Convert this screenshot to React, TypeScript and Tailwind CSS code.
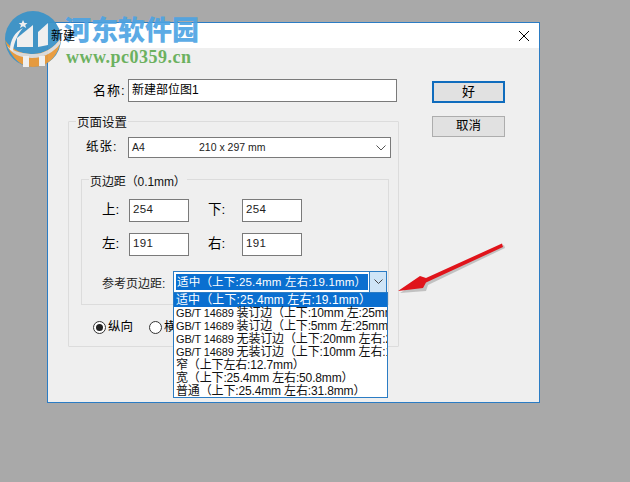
import React from "react";

const F = "font-['Liberation_Sans','Noto_Sans_CJK_SC',sans-serif]";

function Field({ label, value, labelW }: { label: string; value: string; labelW: string }) {
  return (
    <div className="flex items-center">
      <span className={`${labelW} text-[13.5px] text-black text-left`}>{label}</span>
      <div className="w-[60px] h-[23px] border border-[#7a7a7a] bg-white text-[11.5px] leading-[19px] pl-[3px] text-[#222] tracking-[0.4px]">{value}</div>
    </div>
  );
}

const gb = [
  "装订边（上下:10mm 左:25mm右:10mm）",
  "装订边（上下:5mm 左:25mm右:5mm）",
  "无装订边（上下:20mm 左右:25mm）",
  "无装订边（上下:10mm 左右:10mm）",
];
const items = [
  "窄（上下左右:12.7mm）",
  "宽（上下:25.4mm 左右:50.8mm）",
  "普通（上下:25.4mm 左右:31.8mm）",
];

export default function App() {
  return (
    <div className={`relative w-[630px] h-[482px] overflow-hidden bg-[#a9a9a9] pt-[22px] pl-[47px] ${F}`}>
      {/* dialog */}
      <div className="w-[493px] h-[381px] border border-[#2b7cc4] bg-[#efefef] flex flex-col">
        <div className="h-[25px] bg-white flex items-center justify-between pl-[3px] pr-[9px] shrink-0">
          <span className="relative z-10 text-[12px] text-black">新建</span>
          <svg width="12" height="12" viewBox="0 0 12 12" className="text-black">
            <path d="M1 1 L11 11 M11 1 L1 11" stroke="currentColor" strokeWidth="1" fill="none" />
          </svg>
        </div>
        <div className="flex pl-[20px] pt-[31px]">
          {/* left column */}
          <div className="w-[331px] flex flex-col">
            <div className="flex items-center pl-[25px]">
              <span className="text-[13px] text-black tracking-[1px] w-[35px]">名称:</span>
              <div className="w-[269px] h-[23px] border border-[#7a7a7a] bg-white text-[12px] leading-[21px] pl-[3px] text-black shrink-0">新建部位图1</div>
            </div>
            {/* page setup group */}
            <div className="relative mt-[19px] h-[226px] border border-[#dcdcdc] rounded-[1px] pt-[15px] pl-[12px]">
              <span className="absolute left-[7px] top-[-6px] px-[1px] bg-[#efefef] text-[12.5px] leading-[15px] text-[#111]">页面设置</span>
              <div className="flex items-center">
                <span className="w-[47px] pl-[5px] text-[12.5px] text-black tracking-[1px]">纸张:</span>
                <div className="w-[263px] h-[21px] border border-[#7a7a7a] bg-white flex items-center justify-between pl-[3px] pr-[4px]">
                  <span className="flex text-[10.5px] text-[#222]">
                    <span className="w-[67px]">A4</span>
                    <span>210 x 297 mm</span>
                  </span>
                  <svg width="10" height="6" viewBox="0 0 10 6"><path d="M0.5 0.5 L5 5 L9.5 0.5" stroke="#555" fill="none" /></svg>
                </div>
              </div>
              {/* margin group */}
              <div className="relative mt-[21px] w-[308px] h-[126px] border border-[#dcdcdc] pt-[19px] pl-[20px]">
                <span className="absolute left-[7px] top-[-5px] px-[1px] bg-[#efefef] text-[12px] leading-[15px] tracking-[-0.1px] text-[#111]">页边距（0.1mm）</span>
                <div className="flex gap-[19px]">
                  <Field label="上:" value="254" labelW="w-[27px]" />
                  <Field label="下:" value="254" labelW="w-[34px]" />
                </div>
                <div className="flex gap-[19px] mt-[11px]">
                  <Field label="左:" value="191" labelW="w-[27px]" />
                  <Field label="右:" value="191" labelW="w-[34px]" />
                </div>
                <div className="flex items-center mt-[15px]">
                  <span className="w-[71px] pt-[3px] text-[12px] text-[#222] whitespace-nowrap">参考页边距:</span>
                  <div className="w-[214px] h-[22px] border border-[#2b7cc4] bg-white flex items-stretch justify-between shrink-0">
                    <span className="mt-[2px] mb-[2px] ml-[2px] bg-[#0a6fd0] text-white text-[11.5px] leading-[16px] pl-[1px] pr-[2px] whitespace-nowrap tracking-[0.2px]">适中（上下:25.4mm 左右:19.1mm）</span>
                    <span className="w-[17px] bg-[#cfe5f7] border-l border-[#2b7cc4] flex items-center justify-center">
                      <svg width="9" height="6" viewBox="0 0 9 6"><path d="M0.5 0.5 L4.5 4.5 L8.5 0.5" stroke="#444" fill="none" /></svg>
                    </span>
                  </div>
                </div>
              </div>
              {/* orientation */}
              <div className="flex items-center gap-[16px] mt-[13px] pl-[12px] text-[12.5px] text-black">
                <span className="flex items-center gap-[2px]">
                  <span className="w-[13px] h-[13px] rounded-full border border-[#333] bg-white flex items-center justify-center">
                    <span className="w-[7px] h-[7px] rounded-full bg-[#222]" />
                  </span>
                  纵向
                </span>
                <span className="flex items-center gap-[2px]">
                  <span className="w-[13px] h-[13px] rounded-full border border-[#333] bg-white" />
                  横向
                </span>
              </div>
            </div>
          </div>
          {/* buttons */}
          <div className="ml-[33px] pt-[2px] flex flex-col gap-[13px]">
            <div className="w-[73px] h-[22px] border-2 border-[#0f6cbd] bg-[#e1e1e1] flex items-center justify-center text-[13px] text-black">好</div>
            <div className="w-[73px] h-[21px] border border-[#adadad] bg-[#e1e1e1] flex items-center justify-center text-[12.5px] text-black">取消</div>
          </div>
        </div>
      </div>

      {/* open dropdown list */}
      <div className="absolute left-[173px] top-[292px] w-[215px] h-[106px] border border-[#2b7cc4] bg-white overflow-hidden text-[12px] leading-[13px] tracking-[-0.15px] text-[#111]">
        <div className="bg-[#0a6fd0] text-white h-[14px] leading-[15px] whitespace-nowrap pl-[2px] tracking-[0.1px]">适中（上下:25.4mm 左右:19.1mm）</div>
        {gb.map((t) => (
          <div key={t} className="h-[13px] whitespace-nowrap pl-[2px]">
            <span className="text-[11px]">GB/T 14689 </span>
            {t}
          </div>
        ))}
        {items.map((t) => (
          <div key={t} className="h-[13px] whitespace-nowrap pl-[2px]">{t}</div>
        ))}
      </div>

      {/* arrow annotation */}
      <svg className="absolute left-[395px] top-[240px]" width="115" height="56" viewBox="0 0 115 56">
        <path d="M108 6 L31 43 L29 49 L3 51 L25 37 L31 38 L107 3 Z" fill="#8a8a8a" opacity="0.45" transform="translate(2 2)" />
        <path d="M108 7 L31 42.5 L28 48 L3 51 L25 36 L31 38 L107 3.5 Z" fill="#e0141b" />
      </svg>

      {/* watermark */}
      <svg className="absolute left-[4px] top-[10px] opacity-95" width="60" height="60" viewBox="0 0 60 60">
        <circle cx="29" cy="29" r="28" fill="#3c93c8" />
        <path d="M1 30 C6 46 16 57 29 57 C44 57 55 46 57 28 C50 38 40 44 28 44 C16 44 6 38 1 30 Z" fill="#e99a3a" />
        <path d="M3 36 C10 42 20 44 30 44 C40 44 50 38 57 28 L56 34 C50 42 40 48 28 48 C16 48 8 44 3 36 Z" fill="#dcdcdc" />
        <path d="M13 37 L13 28 L29 15 L29 37 Z" fill="#f3f3f3" />
        <path d="M34 37 L34 22 L44 13 L44 35 Z" fill="#f3f3f3" />
        <path d="M19 46 h6 v11 h-6 Z M35 46 h6 v10 h-6 Z" fill="#f3f3f3" />
        <path d="M6 40 C6 30 11 22 19 18 C14 24 10 32 9 41 Z" fill="#f3f3f3" />
        <path d="M19 10 l1.5 3 3 0 -2.3 2 1 3 -3.2 -1.7 -3 1.7 1 -3 -2.3 -2 3 0 Z" fill="#f3f3f3" />
      </svg>
      <div className="absolute left-[64px] top-[12px] text-[27px] leading-[34px] font-black text-[#4ba3e3] opacity-90 whitespace-nowrap font-['Noto_Sans_CJK_SC',sans-serif]">河东软件园</div>
      <div className="absolute left-[66px] top-[46px] text-[18px] leading-[22px] font-bold text-[#6cb15f] whitespace-nowrap tracking-[0.5px] font-['Liberation_Serif',serif]">www.pc0359.cn</div>
    </div>
  );
}
